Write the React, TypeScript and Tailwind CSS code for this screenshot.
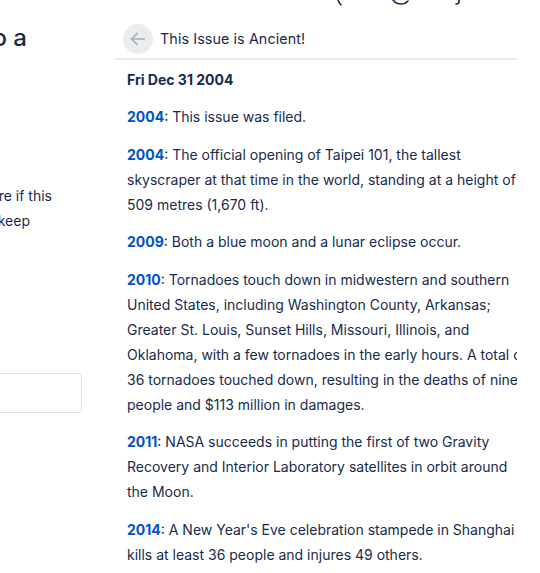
import React from "react";

const entries: { year: string; text: string }[] = [
  { year: "2004", text: "This issue was filed." },
  {
    year: "2004",
    text: "The official opening of Taipei 101, the tallest skyscraper at that time in the world, standing at a height of 509 metres (1,670 ft).",
  },
  { year: "2009", text: "Both a blue moon and a lunar eclipse occur." },
  {
    year: "2010",
    text: "Tornadoes touch down in midwestern and southern United States, including Washington County, Arkansas; Greater St. Louis, Sunset Hills, Missouri, Illinois, and Oklahoma, with a few tornadoes in the early hours. A total of 36 tornadoes touched down, resulting in the deaths of nine people and $113 million in damages.",
  },
  {
    year: "2011",
    text: "NASA succeeds in putting the first of two Gravity Recovery and Interior Laboratory satellites in orbit around the Moon.",
  },
  {
    year: "2014",
    text: "A New Year's Eve celebration stampede in Shanghai kills at least 36 people and injures 49 others.",
  },
  {
    year: "2015",
    text: "Something else happened on this day in history.",
  },
];

export default function App() {
  return (
    <div
      className="w-[540px] h-[573px] overflow-hidden bg-white text-[#172b4d]"
      style={{ fontFamily: "Inter, 'Noto Sans', Arial, sans-serif" }}
    >
      <div className="h-[6px] overflow-hidden">
        <svg width="540" height="6" viewBox="0 0 540 6" fill="none" stroke="#172b4d" strokeWidth="1.6" strokeLinecap="round">
          <path d="M338 0 Q339 3 341 5" />
          <path d="M393 0 Q396 4 401 4 Q405 4 408 1" />
          <path d="M459 0 L459 2 Q459 4 456 4" />
        </svg>
      </div>
      <div className="flex">
        <div className="w-[82px] shrink-0 overflow-hidden">
          <div className="w-[300px] ml-[-218px] flex flex-col items-end">
            <div className="mt-4 mr-[55px] whitespace-nowrap text-[24px] leading-[32px] font-medium">
              Link to a
            </div>
            <div className="mt-[129px] mr-[30px] whitespace-nowrap text-[14px] leading-[25px]">
              Not sure if this
            </div>
            <div className="mr-[52px] whitespace-nowrap text-[14px] leading-[25px]">
              we keep
            </div>
            <div className="mt-[140px] w-[300px] h-[40px] border border-[#dfe1e6] rounded-[3px]" />
          </div>
        </div>
        <div className="ml-[33px] w-[402px] shrink-0 overflow-hidden">
          <div className="pt-[18px] pl-2 flex items-center gap-[7px]">
            <div className="w-[30px] h-[30px] rounded-full bg-[#ebecf0] flex items-center justify-center">
              <svg width="22" height="22" viewBox="0 0 24 24" fill="none" stroke="#a5adba" strokeWidth="1.8" strokeLinecap="round" strokeLinejoin="round">
                <path d="M19 12H5" />
                <path d="M11 6l-6 6 6 6" />
              </svg>
            </div>
            <div className="text-[14.3px] leading-[20px] tracking-[0.1px]">This Issue is Ancient!</div>
          </div>
          <div className="mt-[4px] h-[2px] bg-[#ebecf0]" />
          <div className="pl-3 w-[430px]">
            <div className="mt-[10px] text-[14px] leading-[20px] font-bold">Fri Dec 31 2004</div>
            <div className="mt-[14px] w-[403px] flex flex-col gap-[12.5px]">
              {entries.map((e, i) => (
                <p key={i} className="text-[14px] leading-[25px]">
                  <span className="font-bold text-[#0052cc]">{e.year}</span>: {e.text}
                </p>
              ))}
            </div>
          </div>
        </div>
      </div>
    </div>
  );
}
